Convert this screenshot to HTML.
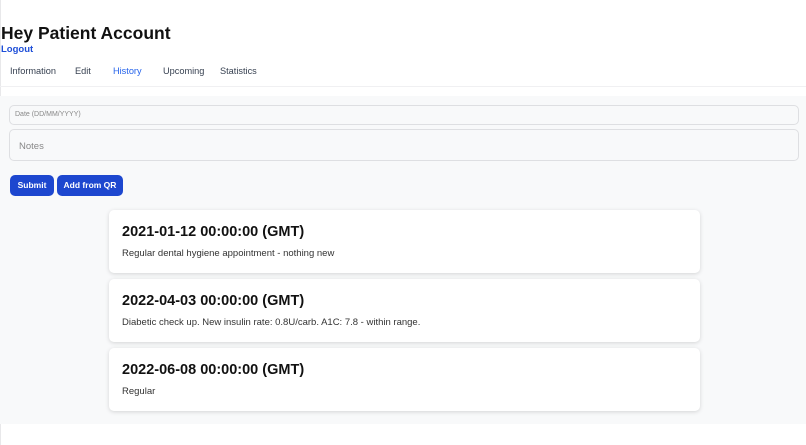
<!DOCTYPE html>
<html><head><meta charset="utf-8"><style>
*{box-sizing:border-box;margin:0;padding:0}
body{width:806px;height:445px;overflow:hidden;background:#fff;font-family:"Liberation Sans",Arial,sans-serif;color:#111827;position:relative}
.lb{position:absolute;left:0;top:0;width:1px;height:445px;background:#e8e8ea}
h1{position:absolute;left:1px;top:23px;font-size:17.5px;font-weight:700;color:#111}
.logout{position:absolute;left:1px;top:44px;font-size:9.5px;font-weight:700;color:#1d4ed8}
.tab{position:absolute;top:66px;font-size:9.2px;color:#374151}
.hr{position:absolute;left:0;right:0;top:86px;height:1px;background:#f0f0f2}
.gray{position:absolute;left:0;right:0;top:96px;height:328px;background:#f8f9fa}
.in{position:absolute;left:9px;width:790px;border:1px solid #dedfe2;border-radius:5px;background:#f8f9fa;color:#888;padding-left:5px}
.btn{position:absolute;top:175px;height:21px;background:#1d47cf;color:#fff;font-size:8.5px;font-weight:700;border-radius:5px;text-align:center;line-height:21px}
.card{position:absolute;left:109px;width:591px;height:63px;background:#fff;border-radius:5px;box-shadow:0 1px 4px rgba(0,0,0,.15)}
.card h2{position:absolute;left:13px;top:14px;font-size:14.5px;font-weight:700;color:#111}
.card p{position:absolute;left:13px;top:38px;font-size:9.5px;color:#333}
</style></head><body>
<div class="lb"></div>
<h1>Hey Patient Account</h1>
<div class="logout">Logout</div>
<div class="tab" style="left:10px">Information</div>
<div class="tab" style="left:75px">Edit</div>
<div class="tab" style="left:113px;color:#2563eb">History</div>
<div class="tab" style="left:163px">Upcoming</div>
<div class="tab" style="left:220px">Statistics</div>
<div class="hr"></div>
<div class="gray"></div>
<div class="in" style="top:105px;height:20px;font-size:7px;line-height:18px">Date (DD/MM/YYYY)</div>
<div class="in" style="top:129px;height:32px;font-size:9.5px;line-height:33px;padding-left:9px">Notes</div>
<div class="btn" style="left:10px;width:44px">Submit</div>
<div class="btn" style="left:57px;width:66px">Add from QR</div>
<div class="card" style="top:210px"><h2>2021-01-12 00:00:00 (GMT)</h2><p>Regular dental hygiene appointment - nothing new</p></div>
<div class="card" style="top:279px"><h2>2022-04-03 00:00:00 (GMT)</h2><p>Diabetic check up. New insulin rate: 0.8U/carb. A1C: 7.8 - within range.</p></div>
<div class="card" style="top:348px"><h2>2022-06-08 00:00:00 (GMT)</h2><p>Regular</p></div>
</body></html>
